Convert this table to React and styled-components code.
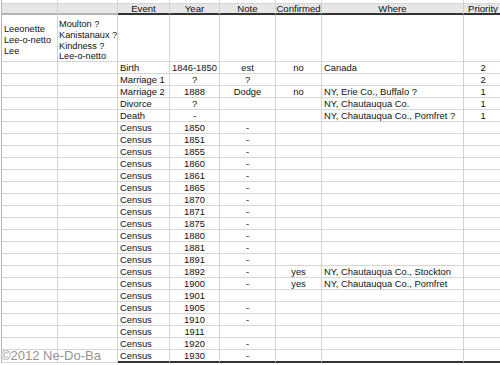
import React from "react";
import styled, { createGlobalStyle } from "styled-components";

const GlobalStyle = createGlobalStyle`
  html, body {
    margin: 0;
    padding: 0;
    background: #fff;
    overflow: hidden;
  }
  body {
    width: 500px;
    height: 365px;
    font-family: "Liberation Sans", Arial, sans-serif;
    color: #111;
  }
`;

const Page = styled.div`
  position: relative;
  width: 500px;
  height: 365px;
  overflow: hidden;
`;

const Sheet = styled.div`
  display: grid;
  grid-template-columns: 56px 60px 52px 50px 56px 46px 142px 39px;
  grid-template-rows: 4px 11px 47px repeat(24, 12px) 13px;
  margin-left: 1px;
  border-left: 1px solid #b8b8b8;
  font-size: 9.4px;
`;

const Cell = styled.div`
  box-sizing: border-box;
  display: flex;
  align-items: center;
  justify-content: ${(p) =>
    p.$align === "center" ? "center" : "flex-start"};
  padding: 0 2px;
  white-space: nowrap;
  overflow: hidden;
  line-height: 11px;
  border-right: 1px solid #d2d2d2;
  border-bottom: ${(p) => p.$bottom || "1px solid #d6d6d6"};
`;

const HeadCell = styled(Cell)`
  background: #e6e6e6;
  justify-content: center;
  line-height: 9px;
  font-size: 9.6px;
  border-bottom: 2px solid ${(p) => (p.$dim ? "#b4b4b4" : "#333")};
`;

const NameCell = styled(Cell)`
  overflow: visible;
  padding: 5px 0 0 ${(p) => p.$pad || 2}px;
  font-size: 9.2px;
`;

const Lines = styled.span`
  line-height: 10.7px;
  white-space: nowrap;
`;

const Watermark = styled.div`
  position: absolute;
  left: 1px;
  top: 349px;
  font-family: "Liberation Sans", Arial, sans-serif;
  font-size: 13px;
  line-height: 13px;
  color: #959595;
  text-shadow: 0 0 1px #fff, 0 0 1px #fff;
`;

const headers = ["", "", "Event", "Year", "Note", "Confirmed", "Where", "Priority"];
const aligns = ["left", "left", "left", "center", "center", "center", "left", "center"];

const events = [
  ["Birth", "1846-1850", "est", "no", "Canada", "2"],
  ["Marriage 1", "?", "?", "", "", "2"],
  ["Marriage 2", "1888", "Dodge", "no", "NY, Erie Co., Buffalo ?", "1"],
  ["Divorce", "?", "", "", "NY, Chautauqua Co.", "1"],
  ["Death", "-", "", "", "NY, Chautauqua Co., Pomfret ?", "1"],
  ["Census", "1850", "-", "", "", ""],
  ["Census", "1851", "-", "", "", ""],
  ["Census", "1855", "-", "", "", ""],
  ["Census", "1860", "-", "", "", ""],
  ["Census", "1861", "-", "", "", ""],
  ["Census", "1865", "-", "", "", ""],
  ["Census", "1870", "-", "", "", ""],
  ["Census", "1871", "-", "", "", ""],
  ["Census", "1875", "-", "", "", ""],
  ["Census", "1880", "-", "", "", ""],
  ["Census", "1881", "-", "", "", ""],
  ["Census", "1891", "-", "", "", ""],
  ["Census", "1892", "-", "yes", "NY, Chautauqua Co., Stockton", ""],
  ["Census", "1900", "-", "yes", "NY, Chautauqua Co., Pomfret", ""],
  ["Census", "1901", "", "", "", ""],
  ["Census", "1905", "-", "", "", ""],
  ["Census", "1910", "-", "", "", ""],
  ["Census", "1911", "", "", "", ""],
  ["Census", "1920", "-", "", "", ""],
  ["Census", "1930", "-", "", "", ""],
];

const App = () => {
  const last = events.length - 1;
  return (
    <Page>
      <GlobalStyle />
      <Sheet>
        {headers.map((_, i) => (
          <Cell key={"top" + i} />
        ))}
        {headers.map((h, i) => (
          <HeadCell key={"h" + i} $dim={i < 2}>
            {h}
          </HeadCell>
        ))}

        <NameCell>
          <Lines>
            Leeonette
            <br />
            Lee-o-netto
            <br />
            Lee
          </Lines>
        </NameCell>
        <NameCell $pad={1}>
          <Lines>
            Moulton ?
            <br />
            Kanistanaux ?
            <br />
            Kindness ?
            <br />
            Lee-o-netto
          </Lines>
        </NameCell>
        {headers.slice(2).map((_, i) => (
          <Cell key={"n" + i} />
        ))}

        {events.map((row, r) =>
          ["", "", ...row].map((v, c) => (
            <Cell
              key={r + "-" + c}
              $align={aligns[c]}
              $bottom={r === last && c > 1 ? "2px solid #333" : undefined}
            >
              {v}
            </Cell>
          ))
        )}
      </Sheet>
      <Watermark>©2012 Ne-Do-Ba</Watermark>
    </Page>
  );
};

export default App;
